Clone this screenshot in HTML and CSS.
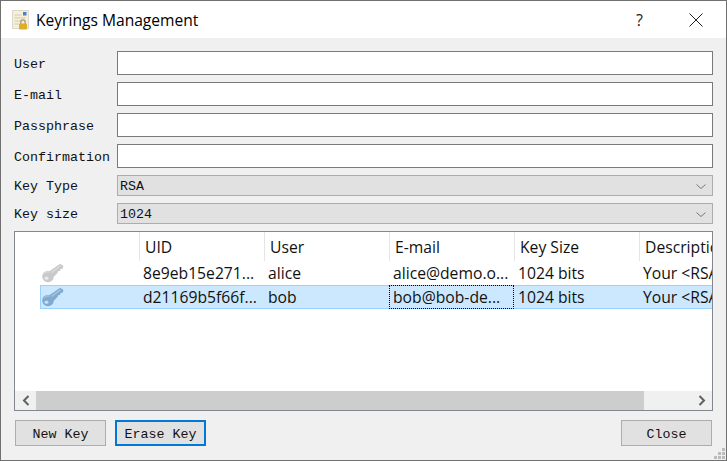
FILE: index.html
```html
<!DOCTYPE html>
<html lang="en">
<head>
<meta charset="utf-8">
<title>Keyrings Management</title>
<link rel="stylesheet" href="styles.css">
</head>
<body>
<svg class="defs" width="0" height="0" aria-hidden="true">
  <defs>
    <symbol id="key" viewBox="0 0 22 20">
      <circle cx="6" cy="13.500" r="5.800" fill="currentColor"/>
      <path d="M7 8.500 L18.200 0.800 L21.500 3 L20.500 5.800 L18.500 6 L18 8 L16 8.200 L15.500 10 L11.500 14 Z" fill="currentColor"/>
      <path d="M9.500 9.500 L18.500 2.800" stroke="#fff" stroke-opacity=".35" stroke-width="1.300" fill="none"/>
      <ellipse cx="4.500" cy="15.200" rx="2" ry="1.600" fill="#fff" fill-opacity=".6"/>
      <path d="M2.500 10.500 A5 5 0 0 1 7.500 9" stroke="#fff" stroke-opacity=".4" fill="none"/>
    </symbol>
  </defs>
</svg>
<div class="window">
  <header class="titlebar">
    <svg class="appicon" width="20" height="20" viewBox="0 0 20 20" aria-hidden="true">
      <rect x="1.500" y="0.500" width="16" height="18" fill="#f8efd4" stroke="#dcd8cc"/>
      <path d="M3.500 5h7M3.500 8h11M3.500 11h6M3.500 14h4" stroke="#cfccc2" stroke-width="1"/>
      <rect x="12" y="2" width="3.500" height="3.500" fill="#4a7fd0"/>
      <path d="M9.800 14v-2a2.200 2.200 0 0 1 4.400 0v2" fill="none" stroke="#a89a70" stroke-width="1.300"/>
      <rect x="8" y="13.500" width="8" height="6" rx="1" fill="#dcae2c"/>
    </svg>
    <span class="title">Keyrings Management</span>
    <span class="help">?</span>
    <svg class="close-x" width="14" height="14" viewBox="0 0 14 14" aria-hidden="true">
      <path d="M.5.5l13 13M13.500.5l-13 13" stroke="#222" stroke-width="1" fill="none"/>
    </svg>
  </header>
  <main class="body">
    <form class="form">
      <label class="lbl">User</label><div class="input"></div>
      <label class="lbl">E-mail</label><div class="input"></div>
      <label class="lbl">Passphrase</label><div class="input"></div>
      <label class="lbl">Confirmation</label><div class="input"></div>
      <label class="lbl">Key Type</label>
      <div class="combo"><span>RSA</span><svg width="10" height="5" viewBox="0 0 10 5"><path d="M.5.500l4.500 4 4.500-4" fill="none" stroke="#777"/></svg></div>
      <label class="lbl">Key size</label>
      <div class="combo"><span>1024</span><svg width="10" height="5" viewBox="0 0 10 5"><path d="M.5.500l4.500 4 4.500-4" fill="none" stroke="#777"/></svg></div>
    </form>
    <section class="table">
      <div class="viewport">
        <div class="head">
          <div class="th first"></div>
          <div class="th">UID</div>
          <div class="th">User</div>
          <div class="th">E-mail</div>
          <div class="th">Key Size</div>
          <div class="th">Description</div>
        </div>
        <div class="row">
          <div class="td first"><svg class="key grey" width="22" height="20"><use href="#key"/></svg></div>
          <div class="td">8e9eb15e271...</div>
          <div class="td">alice</div>
          <div class="td">alice@demo.o...</div>
          <div class="td">1024 bits</div>
          <div class="td">Your &lt;RSA</div>
        </div>
        <div class="row selected">
          <div class="td first"><svg class="key blue" width="22" height="20"><use href="#key"/></svg></div>
          <div class="td">d21169b5f66f...</div>
          <div class="td">bob</div>
          <div class="td focus">bob@bob-de...</div>
          <div class="td">1024 bits</div>
          <div class="td">Your &lt;RSA</div>
        </div>
      </div>
      <div class="hscroll">
        <div class="arrow"><svg width="8" height="11" viewBox="0 0 8 11"><path d="M6.500 1l-4.500 4.500 4.500 4.500" fill="none" stroke="#606060" stroke-width="2"/></svg></div>
        <div class="thumb"></div>
        <div class="rest"></div>
        <div class="arrow"><svg width="8" height="11" viewBox="0 0 8 11"><path d="M1.500 1l4.500 4.500-4.500 4.500" fill="none" stroke="#606060" stroke-width="2"/></svg></div>
      </div>
    </section>
    <footer class="buttons">
      <button class="btn" type="button">New Key</button>
      <button class="btn default" type="button">Erase Key</button>
      <button class="btn push" type="button">Close</button>
    </footer>
    <svg class="grip" width="12" height="12" viewBox="0 0 12 12" aria-hidden="true">
      <path d="M8 0h3v3H8zM4 4h3v3H4zM8 4h3v3H8zM0 8h3v3H0zM4 8h3v3H4zM8 8h3v3H8z" fill="#bcbcbc"/>
    </svg>
  </main>
</div>
</body>
</html>
```
FILE: styles.css
```css
* { box-sizing: border-box; }
html, body { margin: 0; height: 100%; }
body { background: #f0f0f0; overflow: hidden; }
.defs { position: absolute; }
.window {
  width: 727px; height: 461px;
  border: 1px solid #707070;
  display: flex; flex-direction: column;
  background: #f0f0f0;
}
.titlebar {
  height: 37px; background: #fff;
  display: flex; align-items: center;
  padding: 0 0 0 10px;
  font-family: "Open Sans", sans-serif;
  color: #000;
}
.appicon { margin-right: 5px; flex: none; }
.title { font-size: 15.600px; flex: 1; }
.help { font-size: 16px; width: 12px; margin-right: 41px; color: #222; }
.close-x { margin-right: 23px; }
.body { flex: 1; position: relative; padding: 13px 13px 0 13px; display: flex; flex-direction: column; }
.form {
  display: grid;
  grid-template-columns: 103px 1fr;
  grid-template-rows: 24px 24px 24px 24px 21px 21px;
  row-gap: 7px;
  font-family: "Liberation Mono", monospace;
  font-size: 13.330px;
  color: #111;
}
.lbl { align-self: center; padding-top: 2px; }
.input { background: #fff; border: 1px solid #7a7a7a; }
.combo {
  background: #e1e1e1; border: 1px solid #adadad;
  display: flex; align-items: center; justify-content: space-between;
  padding: 1px 6px 0 2px;
}
.table {
  margin-top: 7px; height: 180px;
  border: 1px solid #828790;
  background: #fff;
  display: flex; flex-direction: column;
  font-family: "Open Sans", sans-serif;
  font-size: 15.700px;
  color: #111;
}
.viewport { flex: 1; overflow: hidden; }
.head, .row { display: grid; grid-template-columns: 124px repeat(5, 125px); width: 749px; }
.head { height: 29px; }
.th { border-left: 1px solid #e5e5e5; padding: 2px 0 0 5px; line-height: 26px; white-space: nowrap; }
.th.first { border-left: 0; }
.row { height: 24px; margin-left: 25px; width: 724px; grid-template-columns: 99px repeat(5, 125px); }
.td { line-height: 24px; padding-left: 4px; white-space: nowrap; overflow: hidden; }
.td.first { padding: 2px 0 0 2px; }
.key { display: block; }
.key.grey { color: #c9c9c9; }
.key.blue { color: #7fabd0; }
.selected { background: #cce8ff; box-shadow: inset 0 0 0 1px #99d1ff; }
.focus { outline: 1px dotted #000; outline-offset: -1px; }
.hscroll { height: 19px; display: flex; background: #f0f0f0; }
.arrow { width: 21px; display: flex; align-items: center; justify-content: center; flex: none; }
.thumb { width: 608px; background: #cdcdcd; }
.rest { flex: 1; }
.buttons { margin-top: 9px; display: flex; gap: 9px; padding: 0 1px; }
.btn {
  width: 91px; height: 26px;
  background: #e1e1e1; border: 1px solid #adadad;
  font-family: "Liberation Mono", monospace;
  font-size: 13.330px; color: #111; padding: 2px 0 0;
}
.btn.default { border: 2px solid #0078d7; }
.btn.push { margin-left: auto; }
.grip { position: absolute; right: 0; bottom: 0; }
```
